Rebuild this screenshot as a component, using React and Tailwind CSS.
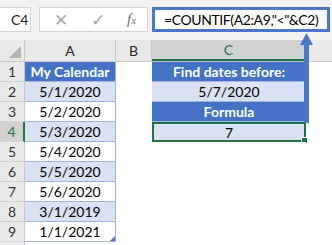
import React from "react";

const rowsA = [
  { v: "My Calendar", head: true },
  { v: "5/1/2020", band: true },
  { v: "5/2/2020" },
  { v: "5/3/2020", band: true },
  { v: "5/4/2020" },
  { v: "5/5/2020", band: true },
  { v: "5/6/2020" },
  { v: "3/1/2019", band: true },
  { v: "1/1/2021" },
];

const rowsC = [
  { v: "Find dates before:", head: true },
  { v: "5/7/2020", band: true },
  { v: "Formula", head: true },
  { v: "7", band: true, sel: true },
];

function cellClass(c) {
  if (!c) return "bg-white";
  if (c.head) return "bg-[#4472c4] text-white font-bold";
  if (c.band) return "bg-[#d9e1f2] text-black";
  return "bg-white text-black";
}

export default function App() {
  return (
    <div
      className="relative w-[332px] h-[245px] overflow-hidden bg-white text-[14px]"
      style={{ fontFamily: "Lato, 'Open Sans', sans-serif" }}
    >
      {/* formula bar */}
      <div className="h-[40px] bg-[#f1f1f1] flex items-start pt-[7px]">
        <div className="w-[31px] h-[25px] bg-white border-y border-r border-[#d4d4d4] flex items-center pl-[11px] text-[14px] text-[#222]">
          C4
        </div>
        <div className="ml-[8px] w-[109px] h-[25px] bg-white border border-[#d4d4d4] flex items-center text-[#a6a6a6]">
          <span className="ml-[14px] text-[17px] font-light leading-none">✕</span>
          <span className="ml-[23px] text-[17px] font-light leading-none">✓</span>
          <span
            className="ml-[22px] text-[15px] italic text-[#6b6b6b]"
            style={{ fontFamily: "'Liberation Serif', serif" }}
          >
            f<span className="text-[11px]">x</span>
          </span>
        </div>
        <div className="ml-[4px] w-[178px] h-[25px] bg-white border-[3px] border-[#4a78c8] flex items-center pl-[9px] text-[14px] tracking-[-0.4px] text-black whitespace-nowrap">
          =COUNTIF(A2:A9,"&lt;"&amp;C2)
        </div>
      </div>

      {/* column headers */}
      <div className="flex h-[22px] bg-[#e9e9e9] border-b border-[#c8c8c8] text-[14px] text-[#222]">
        <div className="w-[25px] border-r border-[#c8c8c8] relative">
          <div className="absolute right-[3px] bottom-[3px] w-0 h-0 border-l-[12px] border-l-transparent border-b-[12px] border-b-[#b4b4b4]" />
        </div>
        <div className="w-[91px] border-r border-[#c8c8c8] flex items-center justify-center">A</div>
        <div className="w-[36px] border-r border-[#c8c8c8] flex items-center justify-center">B</div>
        <div className="w-[154px] bg-[#d2d2d2] border-r border-[#c8c8c8] border-b-2 border-b-[#217346] flex items-center justify-center text-[#217346]">
          C
        </div>
        <div className="flex-1" />
      </div>

      {/* rows */}
      {Array.from({ length: 10 }).map((_, i) => {
        const a = rowsA[i];
        const c = rowsC[i];
        const sel = i === 3;
        return (
          <div key={i} className="flex h-[20px]">
            <div
              className={
                "w-[25px] border-b border-[#d4d4d4] flex items-center justify-center " +
                (sel
                  ? "bg-[#d2d2d2] text-[#217346] border-r-2 border-r-[#217346]"
                  : "bg-[#e9e9e9] text-[#333] border-r border-r-[#c8c8c8]")
              }
            >
              {i < 9 ? i + 1 : ""}
            </div>
            <div
              className={
                "w-[91px] flex items-center justify-center relative " +
                (a ? "border-r border-b border-[#9fb6e2] " : "") +
                cellClass(a)
              }
            >
              {a ? a.v : ""}
              {i === 8 && (
                <div className="absolute right-0 bottom-0 w-0 h-0 border-l-[5px] border-l-transparent border-b-[5px] border-b-[#4472c4]" />
              )}
            </div>
            <div className="w-[36px] bg-white" />
            <div
              className={
                "w-[154px] flex items-center justify-center relative " +
                (c && !c.sel ? "border-b border-[#9fb6e2] " : "") +
                (c && c.sel ? "border-2 border-[#217346] " : "") +
                cellClass(c)
              }
            >
              {c ? c.v : ""}
              {c && c.sel && (
                <div className="absolute right-[-4px] bottom-[-4px] w-[5px] h-[5px] bg-[#217346] border border-white box-content" />
              )}
            </div>
            <div className="flex-1 bg-white" />
          </div>
        );
      })}

      {/* arrow pointing at formula */}
      <svg className="absolute left-[298px] top-[32px]" width="16" height="92" viewBox="0 0 16 92">
        <rect x="6" y="10" width="5" height="81" fill="#4a78c8" />
        <polygon points="8.5,1 2,13 15,13" fill="#4a78c8" />
      </svg>
    </div>
  );
}
